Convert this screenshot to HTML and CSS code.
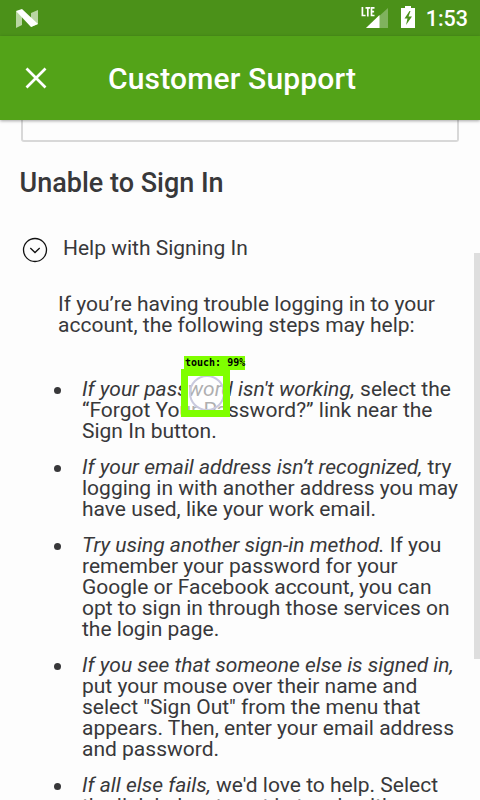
FILE: index.html
```
<!DOCTYPE html>
<html lang="en">
<head>
<meta charset="utf-8">
<title>Customer Support</title>
<link rel="stylesheet" href="styles.css">
</head>
<body>
<div class="status">
  <svg class="nougat" width="24" height="20" viewBox="0 0 24 20"><path fill="#b9d6a2" d="M1 2l6 3v11l-6 3zM16 4l7-3v14l-7 3z"/><path fill="#fff" d="M1 2L7 0l16 15-7 3z"/></svg>
  <span class="time-group">
    <svg width="28" height="22" viewBox="0 0 28 22"><path fill="#80b25e" d="M27 1v20H5z"/><path fill="#fff" d="M18.500 8v13H5z"/><path fill="#4b9119" d="M0 0h15v11H0z"/><path fill="none" stroke="#fff" stroke-width="1.700" d="M1.400 0v8.500h3.200M4.500 .9h4.600M6.800 1v8.400M13.500 .9h-3v7.600h3M10.500 4.600h2.600"/></svg>
    <svg class="battery" width="14" height="22" viewBox="0 0 14 22"><path fill="#fff" d="M4 0h6v2h4v20H0V2h4z"/><path fill="#4b9119" d="M8.500 5L3.500 12.500H6.500L5 19l6-8.500H7.500L9.500 5z"/></svg>
    <span class="clock">1:53</span>
  </span>
</div>
<header class="appbar">
  <svg width="22" height="22" viewBox="0 0 22 22"><path fill="none" stroke="#fff" stroke-width="2.700" d="M1.500 1.500l19 19M20.500 1.500l-19 19"/></svg>
  <h1>Customer Support</h1>
</header>
<main>
  <div class="field"></div>
  <h2>Unable to Sign In</h2>
  <div class="topic">
    <svg width="26" height="26" viewBox="0 0 26 26"><g fill="none" stroke="#111" stroke-width="1.300"><circle cx="13" cy="13" r="11.500"/><path d="M8.300 11l4.700 4.500 4.700-4.500"/></g></svg>
    <span>Help with Signing In</span>
  </div>
  <p>If you’re having trouble logging in to your<br>account, the following steps may help:</p>
  <ul>
    <li><em>If your password isn't working,</em> select the<br>“Forgot Your Password?” link near the<br>Sign In button.</li>
    <li><em>If your email address isn’t recognized,</em> try<br>logging in with another address you may<br>have used, like your work email.</li>
    <li><em>Try using another sign-in method.</em> If you<br>remember your password for your<br>Google or Facebook account, you can<br>opt to sign in through those services on<br>the login page.</li>
    <li><em>If you see that someone else is signed in,</em><br>put your mouse over their name and<br>select "Sign Out" from the menu that<br>appears. Then, enter your email address<br>and password.</li>
    <li><em>If all else fails,</em> we'd love to help. Select<br>the link below to get in touch with</li>
  </ul>
</main>
<div class="scrollbar"></div>
<div class="touch"><span class="touch-label">touch: 99%</span><div class="touch-box"><div class="ring"></div></div></div>
</body>
</html>
```
FILE: styles.css
```
* { box-sizing: border-box; }
body {
  margin: 0;
  width: 480px;
  height: 800px;
  overflow: hidden;
  position: relative;
  background: #fdfdfd;
  color: #38383a;
  font-family: Roboto, "Liberation Sans", sans-serif;
}
svg { display: block; flex: none; }
.status {
  height: 36px;
  background: #4b9119;
  display: flex;
  justify-content: space-between;
  padding: 7px 12px 0 15px;
}
.nougat { margin-top: 2px; }
.time-group { display: flex; color: #fff; }
.battery { margin: -1px 11px 0 12px; }
.clock { font-size: 21.500px; line-height: 24px; font-weight: 500; }
.appbar {
  position: relative;
  height: 84px;
  background: #53a318;
  color: #fff;
  display: flex;
  align-items: center;
  padding-left: 25px;
  box-shadow: 0 1px 3px rgba(0, 0, 0, .35);
}
.appbar h1 {
  margin: 2px 0 0 61px;
  font-size: 30px;
  font-weight: 500;
  line-height: 36px;
  letter-spacing: .16px;
}
.field {
  margin: 0 21px;
  height: 22px;
  border: 2px solid #d8d8d8;
  border-top: 0;
  border-radius: 0 0 3px 3px;
}
h2 {
  margin: 25px 0 0 19.500px;
  font-size: 27px;
  line-height: 32px;
  font-weight: 500;
}
.topic {
  display: flex;
  margin: 35px 0 0 22px;
  height: 28px;
  align-items: center;
  gap: 15px;
  font-size: 21px;
}
.topic svg { margin-top: 3px; }
p, ul {
  font-size: 21px;
  line-height: 21px;
  white-space: nowrap;
}
p { margin: 32px 0 0 58px; }
ul { margin: 43px 0 0; padding-left: 82px; list-style: none; }
li { margin-bottom: 15px; }
li::before {
  content: "";
  float: left;
  width: 7px;
  height: 7px;
  margin: 8px 0 0 -28px;
  border-radius: 50%;
  background: #38383a;
}
.scrollbar {
  position: absolute;
  right: 0;
  top: 253px;
  width: 6px;
  height: 406px;
  background: #dedede;
}
.touch { position: absolute; left: 181px; top: 356px; }
.touch-label {
  display: block;
  margin-left: 3px;
  width: 61px;
  height: 14px;
  padding-left: 1px;
  background: #7fff00;
  color: #000;
  font: bold 10px/14px "DejaVu Sans Mono", monospace;
  white-space: pre;
}
.touch-box {
  width: 49px;
  height: 48px;
  border: 7px solid #7fff00;
  margin-top: -1px;
  overflow: hidden;
  background: rgba(255, 255, 255, .6);
}
.ring {
  width: 36px;
  height: 36px;
  border: 2px solid #c9c9de;
  border-radius: 50%;
  margin: -1px 0 0 1px;
}
```
